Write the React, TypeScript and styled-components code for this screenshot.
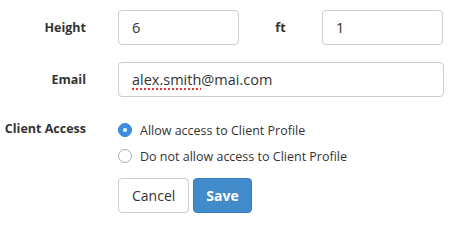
import React from 'react';
import styled, { createGlobalStyle } from 'styled-components';

const GlobalStyle = createGlobalStyle`
  html, body {
    margin: 0;
    padding: 0;
    background: #fff;
  }
  body {
    font-family: "Open Sans", "Liberation Sans", sans-serif;
    color: #333;
  }
`;

const Form = styled.div`
  display: grid;
  grid-template-columns: 86px 1fr;
  column-gap: 32px;
  row-gap: 17px;
  padding: 10px 6px 0 0;
  width: 450px;
  box-sizing: border-box;
`;

const Label = styled.div<{ top?: boolean }>`
  font-size: 12.5px;
  font-weight: 700;
  color: #333;
  white-space: nowrap;
  display: flex;
  justify-content: flex-end;
  align-items: ${(p) => (p.top ? 'flex-start' : 'center')};
  padding-top: ${(p) => (p.top ? '6px' : '0')};
`;

const Row = styled.div`
  display: flex;
  align-items: center;
`;

const Field = styled.div<{ width?: number }>`
  box-sizing: border-box;
  height: 35px;
  width: ${(p) => (p.width ? `${p.width}px` : '100%')};
  border: 1px solid #ccc;
  border-radius: 4px;
  padding: 0 13px;
  display: flex;
  align-items: center;
  font-size: 14.5px;
  color: #333;
  background: #fff;
`;

const Spell = styled.span`
  text-decoration: underline dotted #e53935;
  text-underline-offset: 3px;
  text-decoration-thickness: 1.5px;
`;

const Unit = styled.div`
  font-size: 12.5px;
  font-weight: 700;
  width: 83px;
  text-align: center;
`;

const Options = styled.div`
  display: flex;
  flex-direction: column;
  gap: 8px;
  margin-top: 7px;
`;

const Option = styled.label`
  display: flex;
  align-items: center;
  gap: 8px;
  height: 18px;
  font-size: 12.5px;
  color: #333;
`;

const Radio = styled.span<{ checked?: boolean }>`
  box-sizing: border-box;
  width: 14px;
  height: 14px;
  border-radius: 50%;
  flex-shrink: 0;
  display: flex;
  align-items: center;
  justify-content: center;
  background: ${(p) => (p.checked ? '#3b8ee4' : '#fff')};
  border: 1px solid ${(p) => (p.checked ? '#3282d6' : '#a9a9a9')};
  &::after {
    content: '';
    display: ${(p) => (p.checked ? 'block' : 'none')};
    width: 4px;
    height: 4px;
    border-radius: 50%;
    background: #fff;
  }
`;

const Actions = styled.div`
  grid-column: 2;
  display: flex;
  gap: 4px;
  margin-top: -4px;
`;

const Button = styled.button<{ primary?: boolean }>`
  box-sizing: border-box;
  height: 35px;
  padding: ${(p) => (p.primary ? '0 12px' : '0 13px')};
  font-family: "Open Sans", "Liberation Sans", sans-serif;
  font-size: 14px;
  font-weight: ${(p) => (p.primary ? 700 : 400)};
  color: ${(p) => (p.primary ? '#fff' : '#333')};
  background: ${(p) => (p.primary ? '#428bca' : '#fff')};
  border: 1px solid ${(p) => (p.primary ? '#3a7fbd' : '#ccc')};
  border-radius: 4px;
`;

export default function App() {
  return (
    <>
      <GlobalStyle />
      <Form>
        <Label>Height</Label>
        <Row>
          <Field width={121}>6</Field>
          <Unit>ft</Unit>
          <Field width={121}>1</Field>
        </Row>

        <Label>Email</Label>
        <Field>
          <Spell>alex.smith</Spell>@mai.com
        </Field>

        <Label top>Client Access</Label>
        <Options>
          <Option>
            <Radio checked />
            Allow access to Client Profile
          </Option>
          <Option>
            <Radio />
            Do not allow access to Client Profile
          </Option>
        </Options>

        <Actions>
          <Button>Cancel</Button>
          <Button primary>Save</Button>
        </Actions>
      </Form>
    </>
  );
}
